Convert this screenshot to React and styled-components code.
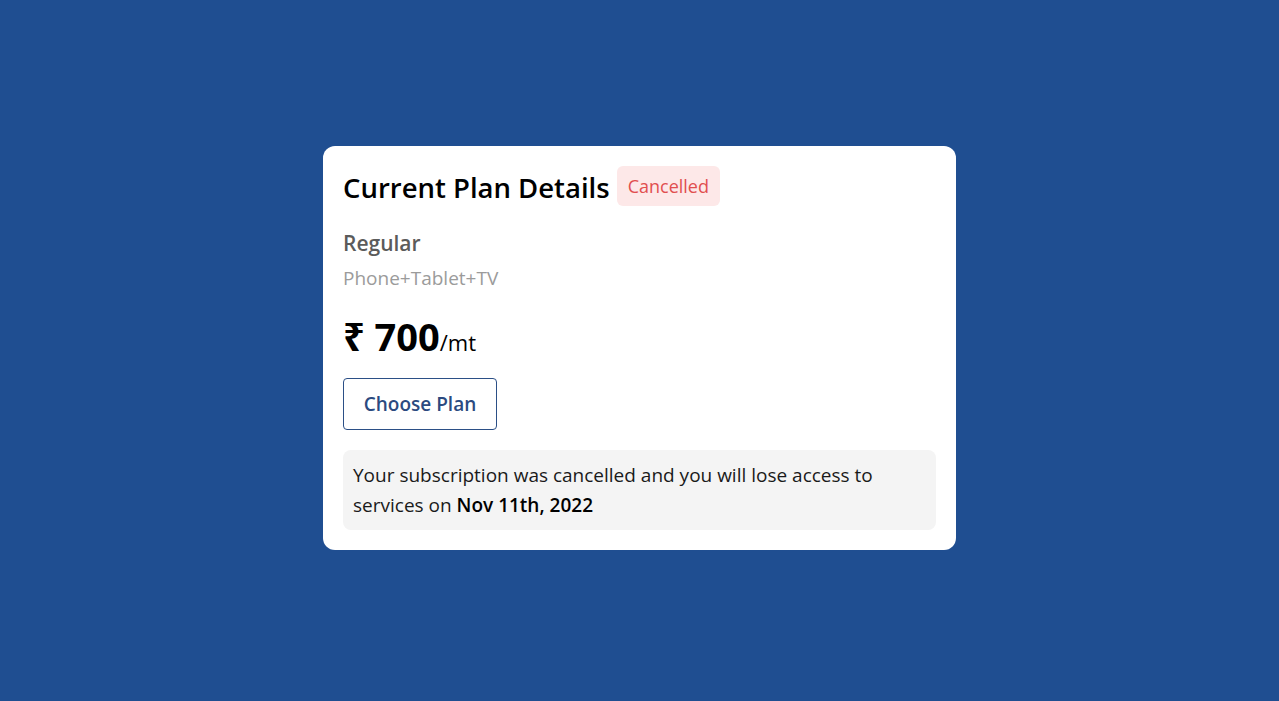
import styled, { createGlobalStyle } from "styled-components";

const GlobalStyle = createGlobalStyle`
  html, body {
    margin: 0;
    padding: 0;
    background: #1f4e91;
    font-family: "Open Sans", "Noto Sans", sans-serif;
  }
`;

const Page = styled.div`
  min-height: 701px;
  display: flex;
  align-items: center;
  justify-content: center;
`;

const Card = styled.div`
  width: 633px;
  box-sizing: border-box;
  background: #ffffff;
  border-radius: 12px;
  padding: 20px;
  margin-top: -5px;
`;

const Header = styled.div`
  display: flex;
  align-items: center;
  gap: 7px;
  margin-top: 3px;
`;

const Title = styled.h2`
  margin: 0;
  font-size: 27.5px;
  font-weight: 600;
  color: #000;
`;

const Badge = styled.span`
  background: #fde8e8;
  color: #e14f4f;
  font-size: 18px;
  font-weight: 400;
  padding: 8px 11px;
  border-radius: 6px;
  margin-top: -4px;
`;

const PlanName = styled.div`
  margin-top: 23px;
  font-size: 21px;
  font-weight: 600;
  color: #5b5b5b;
`;

const PlanDevices = styled.div`
  margin-top: 8px;
  font-size: 19px;
  color: #9b9b9b;
`;

const Price = styled.div`
  margin-top: 19px;
  font-size: 38px;
  font-weight: 700;
  color: #000;
`;

const Per = styled.span`
  font-size: 22px;
  font-weight: 400;
`;

const ChooseButton = styled.button`
  display: block;
  margin-top: 16px;
  width: 154px;
  height: 52px;
  background: #fff;
  border: 1px solid #2b4f86;
  border-radius: 4px;
  color: #2b4a80;
  font-family: inherit;
  font-size: 19px;
  font-weight: 600;
  cursor: pointer;
`;

const Notice = styled.div`
  margin-top: 20px;
  background: #f4f4f4;
  border-radius: 8px;
  padding: 10px;
  font-size: 19px;
  line-height: 30px;
  color: #1a1a1a;

  b {
    font-weight: 600;
    color: #000;
  }
`;

export default function App() {
  return (
    <>
      <GlobalStyle />
      <Page>
        <Card>
          <Header>
            <Title>Current Plan Details</Title>
            <Badge>Cancelled</Badge>
          </Header>
          <PlanName>Regular</PlanName>
          <PlanDevices>Phone+Tablet+TV</PlanDevices>
          <Price>
            ₹ 700<Per>/mt</Per>
          </Price>
          <ChooseButton>Choose Plan</ChooseButton>
          <Notice>
            Your subscription was cancelled and you will lose access to services on <b>Nov 11th, 2022</b>
          </Notice>
        </Card>
      </Page>
    </>
  );
}
